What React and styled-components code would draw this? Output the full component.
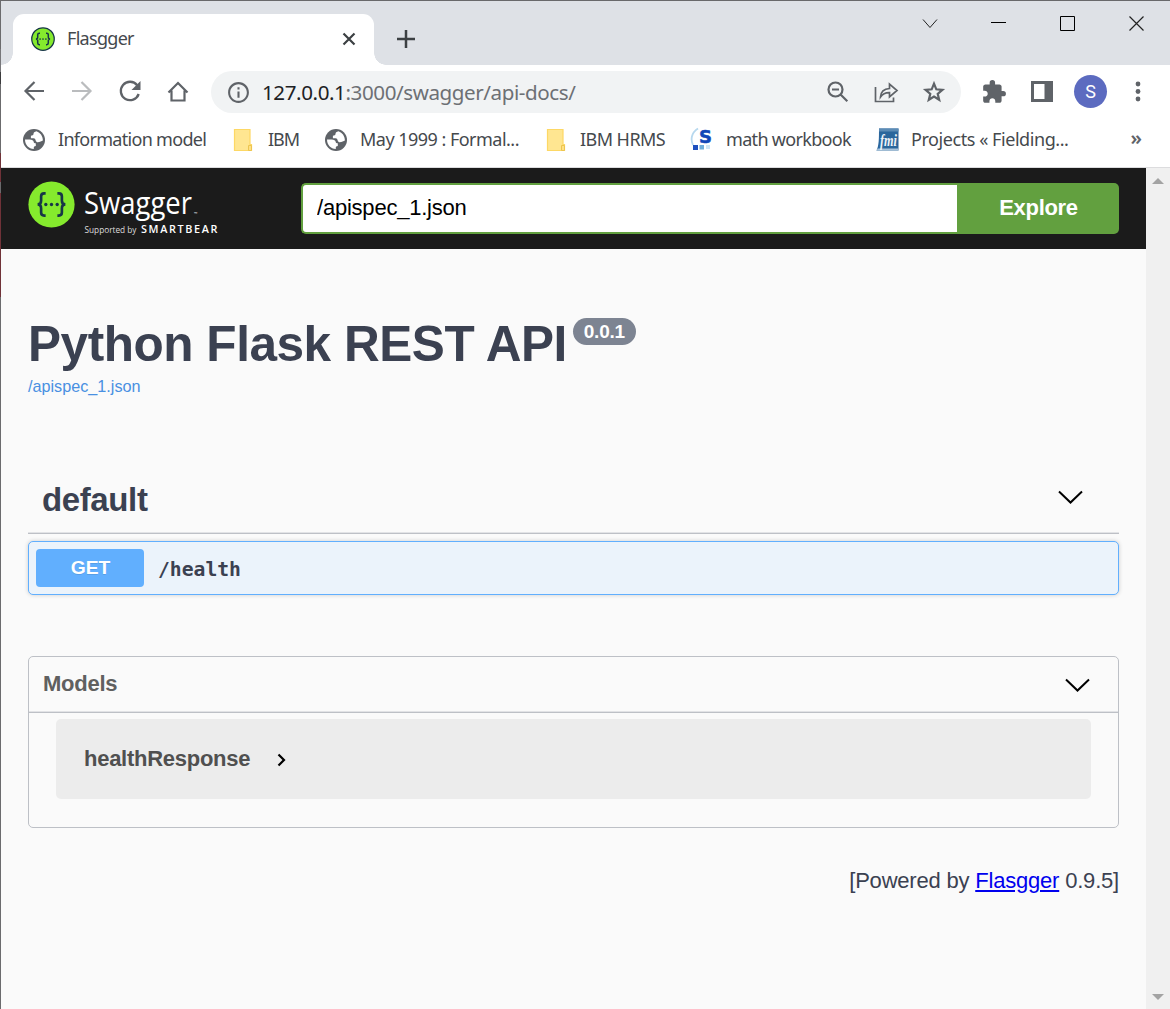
import React from "react";
import styled, { createGlobalStyle } from "styled-components";
import { MdInfoOutline, MdExtension } from "react-icons/md";

const GlobalStyle = createGlobalStyle`
  *, *::before, *::after { box-sizing: border-box; }
  body { margin: 0; background: #fafafa; overflow: hidden; }
`;

const uiFont = `"Noto Sans", "Open Sans", sans-serif`;
const pageFont = `"Liberation Sans", Arial, sans-serif`;

const Window = styled.div`
  width: 1170px;
  height: 1009px;
  display: grid;
  grid-template-columns: 1px 1fr;
  border-top: 1px solid #69696b;
  overflow: hidden;
`;

const WindowEdge = styled.div`
  background: linear-gradient(
    #6b6b6d 0 48px, #77777a 48px 71px, #3b3b3d 71px 83px, #6b6b6d 83px 152px,
    #703238 152px 181px, #6b6b6d 181px 192px, #703238 192px 296px, #6b6b6d 296px
  );
`;

const Browser = styled.div`
  display: flex;
  flex-direction: column;
  min-width: 0;
`;

const TabStrip = styled.div`
  height: 64px;
  flex: none;
  display: flex;
  align-items: flex-end;
  padding-left: 12px;
  background: #dee1e6;
`;

const Tab = styled.div`
  position: relative;
  width: 361px;
  height: 51px;
  padding: 0 18px;
  display: flex;
  align-items: center;
  background: #fff;
  border-radius: 11px 11px 0 0;
  &::before, &::after {
    content: "";
    position: absolute;
    bottom: 0;
    width: 12px;
    height: 12px;
  }
  &::before { left: -12px; background: radial-gradient(circle at 0 0, transparent 11.5px, #fff 12px); }
  &::after { right: -12px; background: radial-gradient(circle at 100% 0, transparent 11.5px, #fff 12px); }
`;

const TabTitle = styled.span`
  flex: 1;
  margin-left: 12px;
  padding-bottom: 3px;
  font: 18px/24px ${uiFont};
  letter-spacing: -0.7px;
  color: #45494d;
`;

const TabIcon = styled.span`
  display: flex;
  padding-bottom: 2px;
`;

const NewTab = styled.div`
  display: flex;
  margin: 0 0 17px 23px;
`;

const WindowControls = styled.div`
  display: flex;
  align-items: center;
  align-self: flex-start;
  gap: 53px;
  margin: 14px 25px 0 auto;
`;

const Toolbar = styled.div`
  height: 53px;
  flex: none;
  display: flex;
  align-items: center;
  background: #fff;
  padding: 0 20px 0 19px;
  color: #5f6368;
`;

const NavButtons = styled.div`
  display: flex;
  gap: 20px;
  width: 191px;
  padding-bottom: 2px;
  svg { flex: none; }
`;

const Omnibox = styled.div`
  width: 750px;
  height: 42px;
  display: flex;
  align-items: center;
  padding: 0 14px 0 15px;
  border-radius: 21px;
  background: #f1f3f4;
`;

const InfoIcon = styled(MdInfoOutline)`
  margin-top: 1px;
`;

const Address = styled.span`
  flex: 1;
  margin-left: 11px;
  font: 20.6px/28px ${uiFont};
  letter-spacing: -0.42px;
  color: #6d7074;
  white-space: nowrap;
`;

const Host = styled.span`
  color: #202124;
`;

const OmniActions = styled.div`
  display: flex;
  gap: 22px;
`;

const Extensions = styled.div`
  flex: 1;
  display: flex;
  align-items: center;
  margin-left: 20px;
`;

const SidePanelIcon = styled.svg`
  margin-left: 24px;
`;

const Avatar = styled.div`
  width: 33px;
  height: 33px;
  margin: 0 28px 0 21px;
  border-radius: 50%;
  background: #5c6bc0;
  color: #fff;
  font: 18px/33px Roboto, sans-serif;
  text-align: center;
`;

const BookmarksBar = styled.div`
  height: 50px;
  flex: none;
  display: flex;
  align-items: center;
  padding: 0 0 6px 21px;
  background: #fff;
  border-bottom: 1px solid #dcdcde;
`;

const Bookmark = styled.div`
  display: flex;
  align-items: center;
  gap: ${(p) => p.$gap}px;
  width: ${(p) => p.$width}px;
  flex: none;
`;

const BookmarkLabel = styled.span`
  padding-bottom: 1px;
  font: 18px/26px ${uiFont};
  letter-spacing: ${(p) => p.$track}px;
  color: #45494d;
  white-space: nowrap;
`;

const Overflow = styled.span`
  margin-left: auto;
  padding: 0 28px 3px 0;
  font: 600 20px/26px ${uiFont};
  color: #5f6368;
`;

const Viewport = styled.div`
  flex: 1;
  display: grid;
  grid-template-columns: 1fr 24px;
  min-height: 0;
`;

const Page = styled.main`
  background: #fafafa;
  font-family: ${pageFont};
  color: #3b4151;
`;

const Scrollbar = styled.div`
  display: flex;
  flex-direction: column;
  justify-content: space-between;
  align-items: center;
  padding: 10px 0 9px;
  background: #f0f0f0;
`;

const Topbar = styled.header`
  height: 81px;
  display: flex;
  align-items: center;
  padding: 0 27px;
  background: #1b1b1b;
`;

const LogoGroup = styled.div`
  display: flex;
  align-items: center;
  width: 200px;
  gap: 9px;
  flex: none;
  > svg { margin-top: -8px; }
`;

const UrlInput = styled.input`
  width: 656px;
  height: 51px;
  margin-left: 73px;
  padding: 0 14px 2px;
  border: 2px solid #62a03f;
  border-right: 0;
  border-radius: 5px 0 0 5px;
  background: #fff;
  color: #000;
  outline: none;
  font: 22px ${pageFont};
  letter-spacing: -0.22px;
`;

const ExploreButton = styled.button`
  flex: 1;
  height: 51px;
  padding: 0 0 2px 1px;
  border: 0;
  border-radius: 0 5px 5px 0;
  background: #62a03f;
  color: #fff;
  font: bold 22px ${pageFont};
  letter-spacing: -0.3px;
`;

const Content = styled.div`
  padding: 66px 27px 0;
`;

const Title = styled.h1`
  display: flex;
  align-items: flex-start;
  gap: 6px;
  margin: 0;
  font-size: 49.5px;
  line-height: 58px;
  letter-spacing: -0.45px;
  white-space: nowrap;
`;

const Version = styled.small`
  width: 63px;
  height: 27px;
  margin-top: 3px;
  border-radius: 14px;
  background: #7d8492;
  color: #fff;
  font-size: 19px;
  line-height: 27px;
  letter-spacing: -0.2px;
  text-align: center;
`;

const SpecLink = styled.a`
  display: block;
  margin-top: 3px;
  font-size: 16.2px;
  line-height: 20px;
  color: #4990e2;
`;

const TagHeader = styled.h2`
  height: 69px;
  display: flex;
  align-items: center;
  justify-content: space-between;
  margin: 69px 0 7px;
  padding: 1px 36px 0 14px;
  border-bottom: 1px solid #bdc0c6;
  box-shadow: inset 0 -1px #e2e3e6;
  font-size: 33px;
  line-height: 38px;
  letter-spacing: -0.38px;
  svg { margin-top: -3px; }
`;

const Operation = styled.div`
  height: 54px;
  display: flex;
  align-items: center;
  gap: 14px;
  padding: 0 7px;
  border: 1px solid #61affe;
  border-radius: 5px;
  background: #ebf3fb;
  box-shadow: 0 0 4px rgba(0, 0, 0, 0.19);
`;

const Method = styled.span`
  width: 108px;
  height: 38px;
  padding-left: 1px;
  border-radius: 4px;
  background: #61affe;
  color: #fff;
  font: bold 19.25px/37px ${pageFont};
  text-align: center;
  text-shadow: 0 1px 0 rgba(0, 0, 0, 0.1);
`;

const Path = styled.span`
  padding-top: 3px;
  font: bold 19.7px/26px "DejaVu Sans Mono", monospace;
`;

const Models = styled.section`
  height: 172px;
  margin-top: 61px;
  border: 1px solid #bdc0c6;
  border-radius: 5px;
`;

const ModelsHeader = styled.h4`
  height: 56px;
  display: flex;
  align-items: center;
  justify-content: space-between;
  margin: 0;
  padding: 2px 28px 0 14px;
  border-bottom: 1px solid #bdc0c6;
  box-shadow: inset 0 -1px #e2e3e6;
  color: #606060;
  font-size: 22px;
  line-height: 26px;
  letter-spacing: -0.25px;
`;

const Model = styled.div`
  height: 80px;
  display: flex;
  align-items: center;
  gap: 27px;
  margin: 6px 27px;
  padding: 2px 27px 0 28px;
  border-radius: 5px;
  background: #ececec;
  color: #505050;
  font-weight: bold;
  font-size: 22px;
  letter-spacing: -0.27px;
`;

const Lift = styled.span`
  padding-bottom: ${(p) => p.$by}px;
`;

const Footer = styled.footer`
  margin-top: 40px;
  text-align: right;
  font-size: 22px;
  line-height: 26px;
  letter-spacing: -0.2px;
  a { color: #0000ee; text-decoration: underline; }
`;

function SwaggerMark({ size, ring }) {
  return (
    <svg width={size} height={size} viewBox="0 0 48 48" fill="none">
      <circle cx="24" cy="24" r={ring ? 22.5 : 23.6} fill="#85ea2d" stroke={ring ? "#173647" : "none"} strokeWidth="2.5" />
      <g stroke="#173647" strokeWidth={ring ? 3 : 2.7}>
        <path d="M18 12.6h-1.5c-2.3 0-3.1 1.2-3.1 3.1v4.2c0 2.5-1 4-3.6 4c2.6 0 3.6 1.6 3.6 4.1v4.2c0 1.9.8 3.1 3.1 3.1H18" />
        <path d="M30 12.6h1.5c2.3 0 3.1 1.2 3.1 3.1v4.2c0 2.5 1 4 3.6 4c-2.6 0-3.6 1.6-3.6 4.1v4.2c0 1.9-.8 3.1-3.1 3.1H30" />
      </g>
      <g fill="#173647">
        <circle cx="18.2" cy="24" r="1.7" />
        <circle cx="24" cy="24" r="1.7" />
        <circle cx="29.8" cy="24" r="1.7" />
      </g>
    </svg>
  );
}

function SwaggerLogo() {
  return (
    <svg width="144" height="60" viewBox="84 175 144 60" fill="#fff" fontFamily="Open Sans, sans-serif">
      <text x="84" y="214" fontSize="31" textLength="108" lengthAdjust="spacingAndGlyphs">Swagger</text>
      <text x="194" y="215" fontSize="4.5">™</text>
      <text x="84.5" y="233" fontSize="8.6" fill="#ddd" textLength="52" lengthAdjust="spacingAndGlyphs">Supported by</text>
      <text x="141" y="232.5" fontSize="10.8" fontWeight="600" textLength="76.5">SMARTBEAR</text>
    </svg>
  );
}

function Globe() {
  return (
    <svg width="24" height="24" viewBox="0 0 24 24">
      <circle cx="12" cy="12" r="11" fill="#5f6368" />
      <path fill="#fff" d="M3 11.500h4.700c2.300.1 3.900 1 4.100 2.700.1.800.8 1 2 1.100v2.600c-1.300.2-2 .7-2 1.500v1.600C6.700 20.800 3 17 3 11.500zM14.500 3.300C12.400 3.800 11.500 4.700 11.500 6c0 1.300-1.200 1.500-2.600 1.700v2.500h2.600c1.400 0 1.900.9 2.100 2 .4 1.900 1.800 2.200 3.700 1.900 1.500-.3 2.600-.9 3.600-1.500.1-4.200-2.500-7.900-6.400-9.300z" />
    </svg>
  );
}

function Folder() {
  return (
    <svg width="22" height="24" viewBox="0 0 22 24">
      <path d="M2.500 1.500H18V16.500h1.500v6h-17z" fill="#ffe691" stroke="#fdd865" strokeWidth="1.200" />
      <path d="M16.500 22.500v-5h3v5z" fill="#ffe083" stroke="#ecc550" />
    </svg>
  );
}

function MathIcon() {
  return (
    <svg width="25" height="25" viewBox="0 0 25 25">
      <path d="M8 1.500C1 6 .5 13 3 18" fill="none" stroke="#b7d8ee" strokeWidth="1.800" />
      <text x="9" y="15.500" fontSize="18" fontWeight="700" fontFamily="DejaVu Sans, sans-serif" fill="#1246b8" stroke="#1246b8" strokeWidth=".5">S</text>
      <rect x="3" y="18" width="5" height="5" fill="#1d4fbe" />
      <rect x="9.500" y="18" width="4.500" height="4.500" fill="#71aedb" />
      <rect x="16" y="18" width="4" height="4" fill="#cfe5f4" />
    </svg>
  );
}

function FmIcon() {
  return (
    <svg width="25" height="24" viewBox="0 0 25 24">
      <path d="M4 .5h19.500v22H1.500C4 18 4 10 4 .5z" fill="#2a669c" />
      <path d="M4 .5h19.500v3H4z" fill="#5b8bb5" />
      <path d="M1 22.500h22.500v-2H3z" fill="#a9c3da" />
      <text x="5" y="17.500" fontSize="17" fontStyle="italic" fontWeight="700" fontFamily="Liberation Serif, serif" fill="#eef3f8" textLength="17" lengthAdjust="spacingAndGlyphs">fmi</text>
    </svg>
  );
}

function Reload() {
  return (
    <svg width="28" height="28" viewBox="0 0 28 28">
      <path d="M21.200 8.200A9.200 9.200 0 1 0 22.700 17" fill="none" stroke="currentColor" strokeWidth="2.300" />
      <path d="M24.500 4v9h-9z" fill="currentColor" />
    </svg>
  );
}

const Stroke = ({ w, h = w, d, width = 2, color = "currentColor" }) => (
  <svg width={w} height={h} viewBox={`0 0 ${w} ${h}`} fill="none" stroke={color} strokeWidth={width}>
    <path d={d} />
  </svg>
);

const bookmarks = [
  { icon: <Globe />, label: "Information model", width: 210, track: -0.7, gap: 12 },
  { icon: <Folder />, label: "IBM", width: 92, track: -1, gap: 14 },
  { icon: <Globe />, label: "May 1999 : Formal...", width: 221, track: -0.52, gap: 12 },
  { icon: <Folder />, label: "IBM HRMS", width: 145, track: -0.55, gap: 13 },
  { icon: <MathIcon />, label: "math workbook", width: 185, track: -0.68, gap: 11 },
  { icon: <FmIcon />, label: "Projects « Fielding...", width: 210, track: -0.44, gap: 11 },
];

const chevron = "M1 1.500L12.500 12.500L24 1.500";

export default function App() {
  return (
    <Window>
      <GlobalStyle />
      <WindowEdge />
      <Browser>
        <TabStrip>
          <Tab>
            <TabIcon><SwaggerMark size={24} ring /></TabIcon>
            <TabTitle>Flasgger</TabTitle>
            <TabIcon><Stroke w={14} d="M1.500 1.500l11 11M12.500 1.500l-11 11" width={2.2} color="#3c4043" /></TabIcon>
          </Tab>
          <NewTab><Stroke w={18} d="M9 0v18M0 9h18" width={2.5} color="#3c4043" /></NewTab>
          <WindowControls>
            <Stroke w={16} d="M1 4.500l7 8 7-8" width={1} color="#222" />
            <Stroke w={16} d="M0 7.500h15" width={1} color="#000" />
            <Stroke w={16} d="M.5 1.500h14v14H.5z" width={1} color="#000" />
            <Stroke w={16} d="M.5 1.500l14 14M14.500 1.500l-14 14" width={1.2} color="#222" />
          </WindowControls>
        </TabStrip>
        <Toolbar>
          <NavButtons>
            <Stroke w={28} d="M24 14H5.500M14.500 5L5.500 14l9 9" width={2.2} />
            <Stroke w={28} d="M4 14h18.500M13.500 5l9 9-9 9" width={2.2} color="#babcbe" />
            <Reload />
            <Stroke w={28} d="M4.500 15.500L14 6l9.500 9.500M7.500 13.500V23.500h13V13.500" width={2.2} />
          </NavButtons>
          <Omnibox>
            <InfoIcon size={25} />
            <Address><Host>127.0.0.1</Host>:3000/swagger/api-docs/</Address>
            <OmniActions>
              <Stroke w={26} d="M17.500 10.500a7 7 0 1 1-14 0a7 7 0 0 1 14 0zM15.800 15.800l6.500 6.500M7 10.500h7" width={2.2} />
              <Stroke w={26} d="M2.500 8v14.500h18v-4M7.500 18c.3-5 3.500-8.200 9-8.500V5l7.500 6.500-7.500 6.500v-4.300C12 13.600 9.500 15 7.500 18z" width={1.7} />
              <Stroke w={26} d="M13 4.600l2.300 5.700 6.100.5-4.700 4 1.500 6L13 17.600l-5.200 3.200 1.500-6-4.700-4 6.100-.5z" width={2.2} />
            </OmniActions>
          </Omnibox>
          <Extensions>
            <MdExtension size={26} />
            <SidePanelIcon width="22" height="22" viewBox="0 0 22 22">
              <path fill="#5f6368" fillRule="evenodd" d="M0 0h22v21H0zM3 3v15h10.500V3z" />
            </SidePanelIcon>
            <Avatar>S</Avatar>
            <svg width="6" height="22" viewBox="0 0 6 22" fill="#5f6368">
              <circle cx="3" cy="3" r="2.4" />
              <circle cx="3" cy="10.5" r="2.4" />
              <circle cx="3" cy="18" r="2.4" />
            </svg>
          </Extensions>
        </Toolbar>
        <BookmarksBar>
          {bookmarks.map((b) => (
            <Bookmark key={b.label} $width={b.width} $gap={b.gap}>
              {b.icon}
              <BookmarkLabel $track={b.track}>{b.label}</BookmarkLabel>
            </Bookmark>
          ))}
          <Overflow>»</Overflow>
        </BookmarksBar>
        <Viewport>
          <Page>
            <Topbar>
              <LogoGroup>
                <SwaggerMark size={47} />
                <SwaggerLogo />
              </LogoGroup>
              <UrlInput defaultValue="/apispec_1.json" />
              <ExploreButton>Explore</ExploreButton>
            </Topbar>
            <Content>
              <Title>Python Flask REST API<Version>0.0.1</Version></Title>
              <SpecLink>/apispec_1.json</SpecLink>
              <TagHeader>
                default
                <Stroke w={25} h={16} d={chevron} color="#000" />
              </TagHeader>
              <Operation>
                <Method>GET</Method>
                <Path>/health</Path>
              </Operation>
              <Models>
                <ModelsHeader>
                  <Lift $by={3}>Models</Lift>
                  <Stroke w={25} h={16} d={chevron} color="#000" />
                </ModelsHeader>
                <Model>
                  <Lift $by={3}>healthResponse</Lift>
                  <Stroke w={10} h={14} d="M1.500 1.500L7 7l-5.500 5.500" width={2.2} color="#000" />
                </Model>
              </Models>
              <Footer>[Powered by <a>Flasgger</a> 0.9.5]</Footer>
            </Content>
          </Page>
          <Scrollbar>
            <svg width="12" height="6"><path d="M6 0l6 6H0z" fill="#a3a3a3" /></svg>
            <svg width="12" height="6"><path d="M0 0h12L6 6z" fill="#a3a3a3" /></svg>
          </Scrollbar>
        </Viewport>
      </Browser>
    </Window>
  );
}
